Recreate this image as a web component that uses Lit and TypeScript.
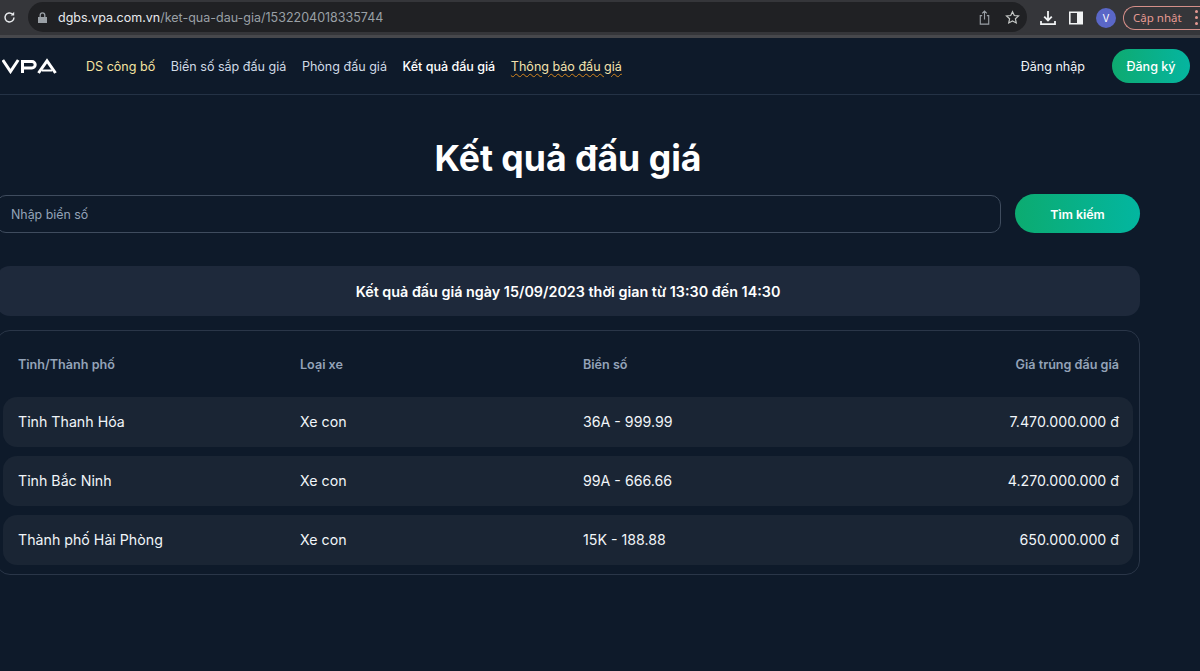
import { LitElement, html, css } from "lit";
import { customElement } from "lit/decorators.js";

const rows = [
  ["Tỉnh Thanh Hóa", "Xe con", "36A - 999.99", "7.470.000.000 đ"],
  ["Tỉnh Bắc Ninh", "Xe con", "99A - 666.66", "4.270.000.000 đ"],
  ["Thành phố Hải Phòng", "Xe con", "15K - 188.88", "650.000.000 đ"],
];

@customElement("app-root")
export class AppRoot extends LitElement {
  static styles = css`
    :host { display: block; height: 671px; overflow: hidden; background: #0e1a2a; font-family: Inter, "Noto Sans", sans-serif; color: #fff; }
    * { box-sizing: border-box; }
    .chrome { height: 38px; background: #35363a; border-bottom: 3px solid #47484c; display: flex; align-items: center; padding: 0 0 0 3px; }
    .reload { width: 13px; height: 13px; margin-right: 12px; flex: none; }
    .omni { width: 999px; height: 30px; background: #202124; border-radius: 15px; display: flex; align-items: center; padding: 0 7px 0 10px; flex: none; margin-top: -1px; font-size: 12.5px; font-family: Inter, sans-serif; }
    .lock { width: 9px; height: 11px; margin-right: 11px; flex: none; }
    .host { color: #e8eaed; }
    .path { color: #9aa0a6; }
    .spacer { flex: 1; }
    .omni svg.ic { width: 15px; height: 15px; margin-left: 13px; }
    .tools { display: flex; align-items: center; flex: 1; padding-left: 13px; gap: 12px; }
    .tools svg { width: 16px; height: 16px; flex: none; }
    .avatar { width: 20px; height: 20px; border-radius: 50%; background: #5a67c7; font-size: 10px; display: flex; align-items: center; justify-content: center; flex: none; }
    .update { height: 24px; flex: none; margin-left: -5px; width: 84px; margin-right: -12px; border: 1px solid #d58f89; border-radius: 12px 0 0 12px; border-right: none; color: #e69a93; font-size: 11.5px; display: flex; align-items: center; padding-left: 9px; gap: 13px; font-family: "Noto Sans", Inter, sans-serif; white-space: nowrap; }
    .dots { display: flex; flex-direction: column; gap: 3px; }
    .dots i { width: 3px; height: 3px; border-radius: 50%; background: #e69a93; display: block; }

    nav { height: 57px; border-bottom: 1px solid #243245; display: flex; align-items: center; padding: 0 10px 0 2px; font-size: 12.55px; }
    .logo { width: 55px; height: 16px; margin-right: 29px; flex: none; }
    .links { display: flex; gap: 15.6px; flex: 1; }
    .links span { color: #d0dae6; white-space: nowrap; }
    .links .yellow { color: #f5e5a0; }
    .links .active { color: #fff; font-weight: 500; }
    .links .fire { color: #f4e2ad; text-decoration: underline wavy #d4861e 1px; text-underline-offset: 2px; }
    .login { color: #f1f5f9; margin-right: 27px; }
    .signup { width: 78px; height: 34px; border-radius: 17px; background: linear-gradient(90deg, #0eaa70, #05b5a0); color: #fff; font-weight: 500; display: flex; align-items: center; justify-content: center; }

    main { width: 1144px; margin-left: -4px; display: flex; flex-direction: column; }
    h1 { margin: 40px 0 0; height: 48px; line-height: 48px; font-size: 35.6px; font-weight: 700; text-align: center; }
    .search { display: flex; gap: 14px; margin-top: 11px; align-items: center; }
    .input { flex: 1; height: 38px; border: 1px solid #3f4c5e; border-radius: 10px; color: #94a3b8; font-size: 12.4px; display: flex; align-items: center; padding: 1px 0 0 14px; }
    .go { width: 125px; height: 39px; border-radius: 20px; background: linear-gradient(90deg, #0cab70, #03b6a0); font-size: 12.4px; font-weight: 600; display: flex; align-items: center; justify-content: center; padding-top: 1px; }
    .banner { margin-top: 33px; height: 50px; border-radius: 14px; background: #1e293b; display: flex; align-items: center; justify-content: center; font-size: 14.35px; font-weight: 600; }
    .table { margin-top: 14px; height: 245px; border: 1px solid #2a3648; border-radius: 14px; padding: 0 6px; }
    .row { display: grid; grid-template-columns: 282px 283px 1fr auto; align-items: center; padding: 0 14px 0 15px; }
    .head { height: 66px; color: #94a3b8; font-size: 12.6px; font-weight: 600; }
    .body { height: 50px; background: #1a2534; border-radius: 14px; margin-bottom: 9px; padding-bottom: 2px; font-size: 14.2px; color: #f1f5f9; }
    .r { text-align: right; }
  `;

  render() {
    return html`
      <div class="chrome">
        <svg class="reload" viewBox="0 0 16 16" fill="none" stroke="#e8eaed" stroke-width="1.8"><path d="M13.5 8a5.5 5.5 0 1 1-1.6-3.900"/><path d="M13.800 1v4.400H9.400" fill="#e8eaed" stroke="none"/></svg>
        <div class="omni">
          <svg class="lock" viewBox="0 0 9 11"><path fill="#9aa0a6" d="M0 5h9v6H0z"/><path fill="none" stroke="#9aa0a6" stroke-width="1.3" d="M2.200 5V3.200a2.300 2.300 0 0 1 4.600 0V5"/></svg>
          <span class="host">dgbs.vpa.com.vn</span><span class="path">/ket-qua-dau-gia/1532204018335744</span>
          <span class="spacer"></span>
          <svg class="ic" viewBox="0 0 16 16" fill="none" stroke="#9aa0a6" stroke-width="1.2"><path d="M5.500 6H3.500v9h9V6h-2M8 10V1M5.500 3.500 8 1l2.500 2.500"/></svg>
          <svg class="ic" viewBox="0 0 16 16" fill="none" stroke="#c4c7c5" stroke-width="1.3"><path d="m8 1.800 1.900 4.100 4.500.5-3.300 3 .9 4.400L8 11.600l-4 2.200.9-4.400-3.300-3 4.500-.5z"/></svg>
        </div>
        <div class="tools">
          <svg viewBox="0 0 16 16" fill="none" stroke="#f1f3f4" stroke-width="1.8"><path d="M8 1v9M4.200 6.600 8 10.400l3.800-3.800M1 11v3.200h14V11"/></svg>
          <svg viewBox="0 0 16 16"><path fill="none" stroke="#f1f3f4" stroke-width="1.6" d="M1.800 2.300h12.400v11.400H1.800z"/><path fill="#f1f3f4" d="M9 2.300h5.200v11.400H9z"/></svg>
          <div class="avatar">V</div>
          <div class="update">Cập nhật <span class="dots"><i></i><i></i><i></i></span></div>
        </div>
      </div>
      <nav>
        <svg class="logo" viewBox="0 0 55 16" fill="none" stroke="#fff" stroke-width="3"><path d="M0.800 2 8.500 13.500 16.200 2"/><path d="M20.500 15V3.500h9.500a3.200 3.200 0 0 1 0 6.400h-9.500"/><path d="M36.500 15 45 2.800 53.500 15"/><path d="M40 12.500h10" stroke-width="2"/></svg>
        <div class="links">
          <span class="yellow">DS công bố</span>
          <span>Biển số sắp đấu giá</span>
          <span>Phòng đấu giá</span>
          <span class="active">Kết quả đấu giá</span>
          <span class="fire">Thông báo đấu giá</span>
        </div>
        <span class="login">Đăng nhập</span>
        <div class="signup">Đăng ký</div>
      </nav>
      <main>
        <h1>Kết quả đấu giá</h1>
        <div class="search">
          <div class="input">Nhập biển số</div>
          <div class="go">Tìm kiếm</div>
        </div>
        <div class="banner">Kết quả đấu giá ngày 15/09/2023 thời gian từ 13:30 đến 14:30</div>
        <div class="table">
          <div class="row head"><span>Tỉnh/Thành phố</span><span>Loại xe</span><span>Biển số</span><span class="r">Giá trúng đấu giá</span></div>
          ${rows.map(
            (r) => html`<div class="row body"><span>${r[0]}</span><span>${r[1]}</span><span>${r[2]}</span><span class="r">${r[3]}</span></div>`
          )}
        </div>
      </main>
    `;
  }
}
